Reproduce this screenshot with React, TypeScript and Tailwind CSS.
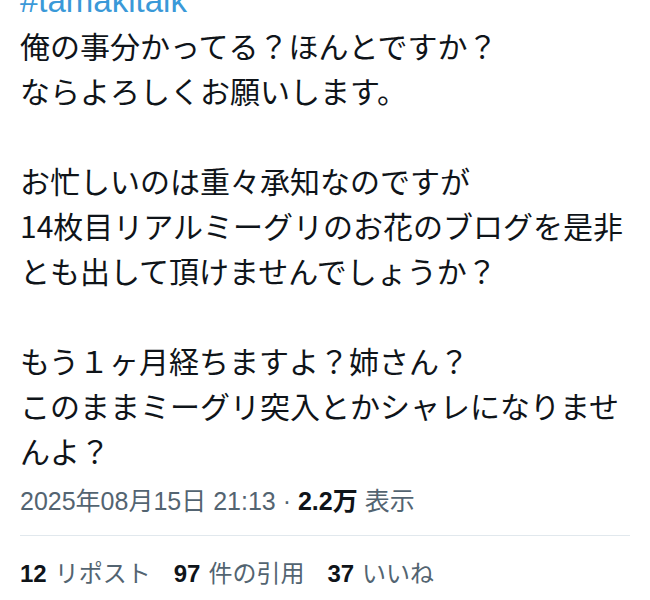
import React from 'react';

const bodyLines: string[] = [
    '俺の事分かってる？ほんとですか？',
    'ならよろしくお願いします。',
    '',
    'お忙しいのは重々承知なのですが',
    '14枚目リアルミーグリのお花のブログを是非',
    'とも出して頂けませんでしょうか？',
    '',
    'もう１ヶ月経ちますよ？姉さん？',
    'このままミーグリ突入とかシャレになりませ',
    'んよ？',
];

const stats = [
    { count: '12', label: 'リポスト' },
    { count: '97', label: '件の引用' },
    { count: '37', label: 'いいね' },
];

const App: React.FC = () => {
    return (
        <div className="w-[650px] h-[600px] overflow-hidden bg-white">
            <div className="px-5 mt-[-22px]">
                {/* hashtag, cut off at the top */}
                <p className="h-[45px] text-[33px] leading-[45px] text-[#3a99d8] font-['Liberation_Sans','Noto_Sans_CJK_JP',sans-serif]">
                    #tamakitalk
                </p>
                <div className="text-[30px] leading-[45px] text-[#0f1419] font-['Noto_Sans_CJK_JP',sans-serif]">
                    {bodyLines.map((line, i) => (
                        <p key={i} className="h-[45px] whitespace-nowrap">{line}</p>
                    ))}
                </div>

                <div className="mt-[10px] text-[25px] leading-[36px] text-[#536471] font-['Liberation_Sans','Noto_Sans_CJK_JP',sans-serif] whitespace-nowrap">
                    2025年08月15日 21:13 · <span className="font-bold text-[#0f1419]">2.2万</span> 表示
                </div>

                <div className="mt-[16px] h-px bg-[#e1e8ed]" />

                <div className="mt-[20px] flex gap-[23px] text-[24px] leading-[36px] font-['Liberation_Sans','Noto_Sans_CJK_JP',sans-serif] whitespace-nowrap">
                    {stats.map((s) => (
                        <span key={s.label} className="flex text-[#536471]">
                            <span className="font-bold text-[#0f1419]">{s.count}</span>
                            <span className="ml-[8px]">{s.label}</span>
                        </span>
                    ))}
                </div>
            </div>
        </div>
    );
};

export default App;
